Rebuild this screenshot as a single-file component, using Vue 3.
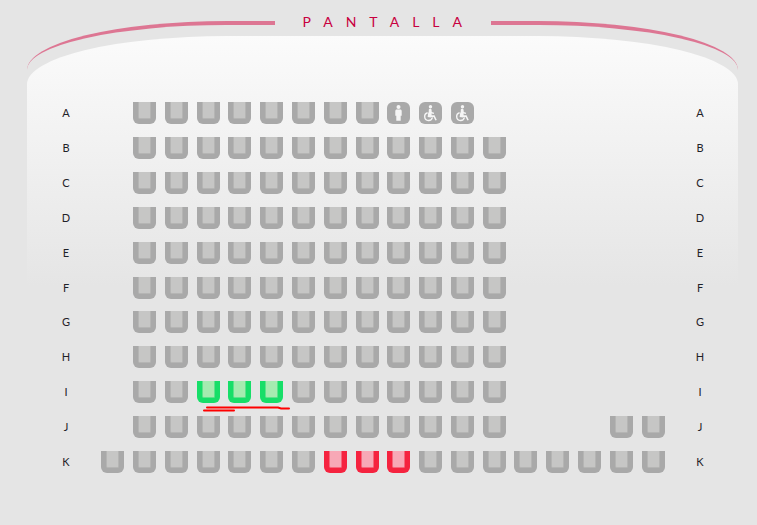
<script setup>
import { reactive } from 'vue'

const range = (from, to) => Array.from({ length: to - from + 1 }, (_, i) => from + i)

const makeRow = (name, columns, kinds = {}) => ({
  name,
  seats: columns.map((column, i) => ({
    id: `${name}${i + 1}`,
    column,
    kind: kinds[column] || 'free',
  })),
})

const rows = reactive([
  makeRow('A', range(2, 12), { 10: 'person', 11: 'wheelchair', 12: 'wheelchair' }),
  ...['B', 'C', 'D', 'E', 'F', 'G', 'H'].map((name) => makeRow(name, range(2, 13))),
  makeRow('I', range(2, 13), { 4: 'selected', 5: 'selected', 6: 'selected' }),
  makeRow('J', [...range(2, 13), 17, 18]),
  makeRow('K', range(1, 18), { 8: 'taken', 9: 'taken', 10: 'taken' }),
])

function toggle(seat) {
  if (seat.kind === 'free') seat.kind = 'selected'
  else if (seat.kind === 'selected') seat.kind = 'free'
}
</script>

<template>
  <main class="room">
    <header class="screen">
      <span class="arc arc-left"></span>
      <h1 class="title">PANTALLA</h1>
      <span class="arc arc-right"></span>
    </header>

    <section class="hall">
      <div class="rows">
        <div v-for="row in rows" :key="row.name" class="row">
          <span class="label">{{ row.name }}</span>
          <div class="seats">
            <button
              v-for="seat in row.seats"
              :key="seat.id"
              type="button"
              class="seat"
              :class="seat.kind"
              :style="{ gridColumn: seat.column }"
              :aria-label="seat.id"
              @click="toggle(seat)"
            >
              <svg v-if="seat.kind === 'person'" class="icon" viewBox="0 0 23 22" aria-hidden="true">
                <circle cx="11.5" cy="5" r="2" />
                <path d="M9.9 7.6h3.2c1.1 0 1.6.6 1.6 1.5v4.7h-1v5H9.3v-5h-1V9.100c0-.9.500-1.500 1.600-1.500z" />
              </svg>
              <svg v-else-if="seat.kind === 'wheelchair'" class="icon" viewBox="0 0 23 22" aria-hidden="true">
                <circle cx="11.5" cy="4.700" r="1.700" />
                <path d="M9.800 7.400c.2-1 2.600-1 2.700.1l.3 2.500 2.300.8-.3 1.200-2.300-.4.2 1.600h2.900l2.200 4.700-1.400.6-1.800-3.600h-5z" />
                <path class="wheel" d="M8.600 10.800a3.900 3.900 0 1 0 4.800 4.600" />
                <path class="wheel" d="M10 10.500l-.6 4 2.600.4" />
              </svg>
              <span v-else class="cushion"></span>
            </button>
            <svg v-if="row.name === 'I'" class="mark" viewBox="0 0 100 8" aria-hidden="true">
              <path d="M15 2.500H86l3 1H97M12 5.500H42" />
            </svg>
          </div>
          <span class="label">{{ row.name }}</span>
        </div>
      </div>
    </section>
  </main>
</template>

<style>
body {
  background: #e5e5e5;
}
</style>

<style scoped>
.room {
  padding: 12px 19px 39px 27px;
  font-family: Lato, "Liberation Sans", sans-serif;
  color: #1f2228;
}

.screen {
  display: flex;
  align-items: flex-start;
  height: 24px;
}

.arc {
  flex: 1;
  height: 45px;
  margin-top: 9px;
  border-top: 4px solid #dd7693;
}

.arc-left {
  border-top-left-radius: 200px 49px;
}

.arc-right {
  border-top-right-radius: 200px 49px;
}

.title {
  box-sizing: border-box;
  width: 216px;
  margin: 0;
  padding-left: 28px;
  font-size: 14px;
  font-weight: 400;
  line-height: 20px;
  letter-spacing: 13px;
  white-space: nowrap;
  color: #c8003f;
}

.hall {
  padding: 66px 23px 0 24px;
  border-radius: 200px 200px 0 0 / 48px 48px 0 0;
  background: linear-gradient(#fbfbfb, #e5e5e5 250px);
}

.rows {
  display: grid;
  grid-auto-rows: 1fr;
  min-height: 384px;
}

.row {
  display: grid;
  grid-template-columns: 30px 1fr 30px;
  column-gap: 16px;
  align-items: start;
}

.label {
  font-size: 11px;
  line-height: 22px;
  text-align: center;
}

.seats {
  position: relative;
  display: grid;
  grid-template-columns: repeat(18, 1fr);
  justify-items: center;
}

.seat {
  display: flex;
  grid-row: 1;
  width: 23px;
  height: 22px;
  padding: 0 5px 5px;
  border: 0;
  border-radius: 0 0 6px 6px;
  background: #a9a9a9;
  cursor: pointer;
}

.cushion {
  flex: 1;
  border: 1px solid #b5b5b4;
  border-top: 0;
  border-radius: 0 0 2px 2px;
  background: #c6c6c5;
}

.selected {
  background: #17de68;
}

.selected .cushion {
  border-color: #5ce38b;
  background: #a5ebb0;
}

.taken {
  background: #f5233f;
}

.taken .cushion {
  border-color: #f6667b;
  background: #f7a8b6;
}

.person,
.wheelchair {
  padding: 0;
  border-radius: 6px;
}

.icon {
  width: 23px;
  height: 22px;
  fill: #f5f5f5;
}

.wheel {
  fill: none;
  stroke: #f5f5f5;
  stroke-width: 1.4;
}

.mark {
  position: absolute;
  grid-column: 4;
  top: 24px;
  left: 0;
  width: 100px;
  height: 8px;
  fill: none;
  stroke: #f00;
  stroke-width: 2;
  stroke-linecap: round;
  pointer-events: none;
}
</style>
